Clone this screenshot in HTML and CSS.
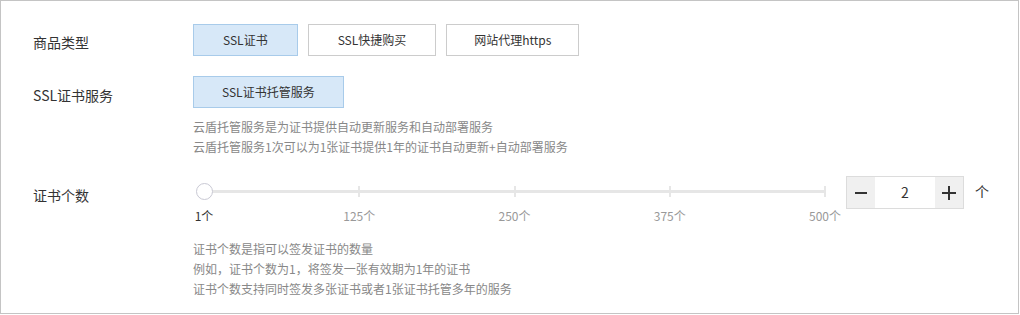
FILE: index.html
```html
<!DOCTYPE html>
<html lang="zh-CN">
<head>
<meta charset="utf-8">
<title>SSL证书</title>
<link rel="stylesheet" href="styles.css">
</head>
<body>
<div class="panel">
  <div class="row row-type">
    <div class="label">商品类型</div>
    <div class="content">
      <div class="options">
        <button class="opt selected">SSL证书</button>
        <button class="opt">SSL快捷购买</button>
        <button class="opt">网站代理https</button>
      </div>
    </div>
  </div>
  <div class="row row-service">
    <div class="label">SSL证书服务</div>
    <div class="content">
      <div class="options">
        <button class="opt selected">SSL证书托管服务</button>
      </div>
      <div class="desc">
        <p>云盾托管服务是为证书提供自动更新服务和自动部署服务</p>
        <p>云盾托管服务1次可以为1张证书提供1年的证书自动更新+自动部署服务</p>
      </div>
    </div>
  </div>
  <div class="row row-count">
    <div class="label">证书个数</div>
    <div class="content">
      <div class="count-line">
        <div class="slider">
          <div class="track">
            <span class="tick" style="left:25%"></span>
            <span class="tick" style="left:50%"></span>
            <span class="tick" style="left:75%"></span>
            <span class="tick" style="left:100%"></span>
            <span class="handle" style="left:0%"></span>
            <span class="mark current" style="left:0%">1个</span>
            <span class="mark" style="left:25%">125个</span>
            <span class="mark" style="left:50%">250个</span>
            <span class="mark" style="left:75%">375个</span>
            <span class="mark" style="left:100%">500个</span>
          </div>
        </div>
        <div class="stepper">
          <button class="step minus" aria-label="减少"><svg width="12" height="12" viewBox="0 0 12 12"><rect x="0" y="5" width="12" height="2" fill="#333"/></svg></button>
          <div class="value">2</div>
          <button class="step plus" aria-label="增加"><svg width="14" height="14" viewBox="0 0 14 14"><rect x="0" y="6" width="14" height="2" fill="#333"/><rect x="6" y="0" width="2" height="14" fill="#333"/></svg></button>
        </div>
        <span class="unit">个</span>
      </div>
      <div class="desc desc-count">
        <p>证书个数是指可以签发证书的数量</p>
        <p>例如，证书个数为1，将签发一张有效期为1年的证书</p>
        <p>证书个数支持同时签发多张证书或者1张证书托管多年的服务</p>
      </div>
    </div>
  </div>
</div>
</body>
</html>
```

FILE: styles.css
```css
* { box-sizing: border-box; }
html, body {
  margin: 0;
  padding: 0;
  background: #fff;
}
body {
  font-family: "Noto Sans CJK SC", "Noto Sans", sans-serif;
  color: #333;
}
.panel {
  width: 1019px;
  height: 314px;
  border: 1px solid #c4c4c4;
  padding: 23px 0 0 32px;
}
.row {
  display: flex;
  align-items: flex-start;
}
.row-service { margin-top: 16px; }
.row-count { margin-top: 19px; }
.label {
  width: 160px;
  flex: none;
  font-size: 14px;
  line-height: 36px;
  color: #333;
}
.row-service .label { line-height: 38px; }
.row-count .label { line-height: 38px; }
.content {
  flex: 1;
}
.options {
  display: flex;
  gap: 10px;
}
.opt {
  height: 32px;
  padding: 0 29px;
  border: 1px solid #ccc;
  background: #fff;
  font-family: inherit;
  font-size: 12px;
  color: #333;
  line-height: 30px;
  cursor: pointer;
}
.opt.selected {
  background: #d7e8f8;
  border-color: #a8cbea;
}
.row-type .opt:nth-child(3) { padding: 0 27px; }
.row-service .opt { padding: 0 28px; }
.desc {
  margin-top: 9px;
}
.desc p {
  margin: 0;
  font-size: 12px;
  line-height: 20px;
  color: #888;
}
.count-line {
  display: flex;
  align-items: flex-start;
}
.slider {
  width: 653px;
  height: 33px;
  padding: 14px 21px 0 11px;
  flex: none;
}
.track {
  position: relative;
  height: 3px;
  background: #e6e6e6;
}
.tick {
  position: absolute;
  top: -4px;
  width: 2px;
  height: 11px;
  margin-left: -1px;
  background: #e6e6e6;
}
.handle {
  position: absolute;
  top: -7px;
  width: 17px;
  height: 17px;
  margin-left: -8px;
  border-radius: 50%;
  border: 1px solid #c9c9d4;
  background: #fff;
}
.mark {
  position: absolute;
  top: 16px;
  transform: translateX(-50%);
  font-size: 12px;
  line-height: 20px;
  color: #999;
  white-space: nowrap;
}
.mark.current { color: #333; }
.stepper {
  display: flex;
  height: 33px;
  width: 118px;
  border: 1px solid #dcdcdc;
  flex: none;
}
.step {
  width: 28px;
  height: 31px;
  border: 0;
  padding: 0;
  background: #f0f0f0;
  display: flex;
  align-items: center;
  justify-content: center;
}
.value {
  width: 60px;
  text-align: center;
  font-size: 14px;
  line-height: 31px;
  color: #333;
}
.unit {
  margin-left: 11px;
  font-size: 14px;
  line-height: 31px;
  color: #333;
}
.desc-count {
  margin-top: 30px;
}
```
